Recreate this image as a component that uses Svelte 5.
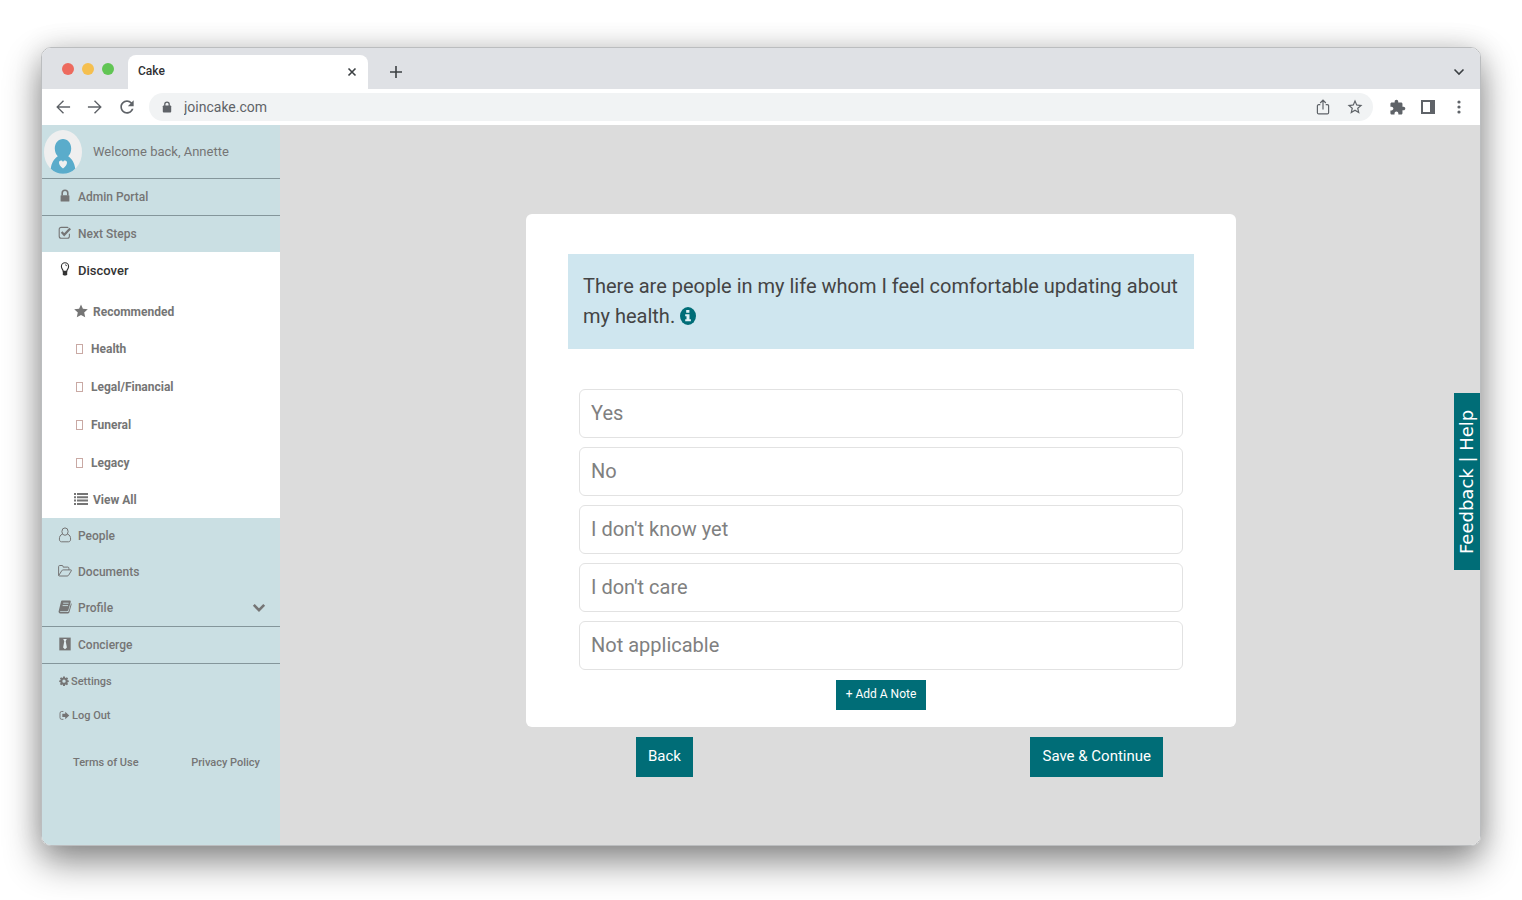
<script>
  const account = [
    { label: 'Admin Portal', icon: 'lock', line: true },
    { label: 'Next Steps', icon: 'check', line: false }
  ];
  const topics = [
    { label: 'Recommended', icon: 'star' },
    { label: 'Health', icon: '' },
    { label: 'Legal/Financial', icon: '' },
    { label: 'Funeral', icon: '' },
    { label: 'Legacy', icon: '' },
    { label: 'View All', icon: 'list' }
  ];
  const library = [
    { label: 'People', icon: 'person', line: false },
    { label: 'Documents', icon: 'folder', line: false },
    { label: 'Profile', icon: 'book', line: true, more: true },
    { label: 'Concierge', icon: 'tie', line: true }
  ];
  const answers = ['Yes', 'No', "I don't know yet", "I don't care", 'Not applicable'];
</script>

{#snippet glyph(name)}
  {#if name === 'lock'}
    <svg width="14" height="14" viewBox="0 0 14 14" aria-hidden="true">
      <path d="M4.2 6.4V4a2.8 2.8 0 0 1 5.6 0v2.4" fill="none" stroke="currentColor" stroke-width="1.6" />
      <rect x="2.6" y="6.2" width="8.8" height="6.4" rx=".6" fill="currentColor" />
    </svg>
  {:else if name === 'check'}
    <svg width="14" height="14" viewBox="0 0 14 14" aria-hidden="true">
      <path d="M11.4 7.8v2.4a2 2 0 0 1-2 2H3.2a2 2 0 0 1-2-2V3.4a2 2 0 0 1 2-2h6.2l1 .3" fill="none" stroke="currentColor" stroke-width="1.1" />
      <path d="m3.6 6 2.6 2.8 6-6.4" fill="none" stroke="currentColor" stroke-width="2.2" />
    </svg>
  {:else if name === 'bulb'}
    <svg width="14" height="14" viewBox="0 0 14 14" aria-hidden="true">
      <path d="M5.3 9.4C5.1 7.6 3.4 6.8 3.4 4.4a3.6 3.6 0 0 1 7.2 0c0 2.4-1.7 3.2-1.9 5z" fill="none" stroke="currentColor" stroke-width="1.1" />
      <path d="M7 2.8c1.1 0 1.7.5 1.8 1.4" fill="none" stroke="currentColor" stroke-width=".8" />
      <path d="M4.8 9.3h4.4v2.9L8.2 13.6H5.8l-1-1.4z" fill="currentColor" />
    </svg>
  {:else if name === 'star'}
    <svg width="14" height="14" viewBox="0 0 14 14" aria-hidden="true">
      <path d="m7 .4 1.9 4.3 4.9.6-3.6 3.1 1 4.9L7 10.9l-4.2 2.4 1-4.9L.2 5.3l4.9-.6z" fill="currentColor" />
    </svg>
  {:else if name === 'list'}
    <svg width="14" height="14" viewBox="0 0 14 14" aria-hidden="true">
      <path d="M0 1h2v2H0zM3 1h11v2H3zM0 4.3h2v2H0zM3 4.3h11v2H3zM0 7.6h2v2H0zM3 7.6h11v2H3zM0 10.9h2v2H0zM3 10.9h11v2H3z" fill="currentColor" />
    </svg>
  {:else if name === 'person'}
    <svg width="14" height="16" viewBox="0 0 14 16" aria-hidden="true">
      <g fill="none" stroke="currentColor" stroke-width="1">
        <ellipse cx="7" cy="4.6" rx="3.1" ry="3.7" />
        <path d="M4.3 7.2C2.2 7.9 1.4 9.7 1.4 12.1c0 1.7.8 2.7 2.1 2.7h7c1.3 0 2.1-1 2.1-2.7 0-2.4-.8-4.2-2.9-4.9" />
      </g>
    </svg>
  {:else if name === 'folder'}
    <svg width="14" height="14" viewBox="0 0 14 14" aria-hidden="true">
      <path d="M.6 11V2.6c0-.7.4-1.1 1.1-1.1h2.4c.7 0 1 .4 1 1.1v.5h4.7c.7 0 1.1.4 1.1 1.1v1.6M.7 11.6l3-4.8c.3-.6.7-.9 1.4-.9h7.8c.6 0 .7.4.4.9l-2.6 4.3c-.4.6-.8.9-1.5.9H1.6c-.7 0-1-.3-1-1" fill="none" stroke="currentColor" stroke-width="1" stroke-linejoin="round" />
    </svg>
  {:else if name === 'book'}
    <svg width="14" height="14" viewBox="0 0 14 14" aria-hidden="true">
      <path d="M4.4.6h7.3c.9 0 1.3.6 1 1.5l-2.3 8c-.2.8-.6 1.1-1.4 1.1H2.4c-.5 0-.5.8 0 .8h7.3c.5 0 .8-.2 1-.7l2.3-8.1c.6.3.8.7.6 1.3l-2.2 7.7c-.2.8-.8 1.2-1.6 1.2H2.3C1 13.4.2 12.1.7 11l2.2-9c.2-.9.7-1.4 1.5-1.4z" fill="currentColor" />
      <path d="M5.2 3.2h5.4M4.6 5.6H10" stroke="#cadfe3" stroke-width=".9" />
    </svg>
  {:else if name === 'tie'}
    <svg width="14" height="14" viewBox="0 0 14 14" aria-hidden="true">
      <rect x="1.3" y=".6" width="11.4" height="12.8" fill="currentColor" />
      <path d="M5.2 2h3.6L7.7 4.2l1.2 6.2L7 12.3l-1.9-1.9 1.2-6.2z" fill="#e1ecef" />
    </svg>
  {:else if name === 'gear'}
    <svg width="10" height="10" viewBox="1 1 22 22" aria-hidden="true">
      <path fill="currentColor" fill-rule="evenodd" d="m10 2 4 0 .5 2.9 1.4.6 2.4-1.7 2.700 2.800-1.700 2.300.6 1.400 2.600.4v3.600l-2.600.4-.6 1.500 1.700 2.300-2.700 2.800-2.400-1.700-1.400.6L14 23h-4l-.5-2.800-1.400-.6-2.400 1.700L3 18.500l1.700-2.300-.6-1.500-2.600-.4v-3.600l2.600-.4.6-1.400L3 6.600l2.700-2.800 2.400 1.700 1.400-.6zM12 8.700a3.700 3.700 0 1 0 0 7.400 3.700 3.700 0 0 0 0-7.400z" />
    </svg>
  {:else if name === 'exit'}
    <svg width="11" height="11" viewBox="0 0 12 12" aria-hidden="true">
      <path d="M4.800 1.600H3a1.900 1.900 0 0 0-1.900 1.900v4.800A1.900 1.900 0 0 0 3 10.200h1.800" fill="none" stroke="currentColor" stroke-width="1" />
      <path d="M3.600 4.200h3.200V1.800L11.200 6l-4.400 4.200V7.700H3.600z" fill="currentColor" />
    </svg>
  {/if}
{/snippet}

<div class="stage">
  <div class="window">
    <header class="tabs">
      <div class="lights"><i class="red"></i><i class="amber"></i><i class="green"></i></div>
      <div class="tab">
        <span>Cake</span>
        <button aria-label="Close tab">
          <svg width="10" height="10" viewBox="0 0 10 10"><path d="m1.500 1.500 7 7m0-7-7 7" stroke="#3c4043" stroke-width="1.600" /></svg>
        </button>
      </div>
      <button class="plus" aria-label="New tab">
        <svg width="12" height="12" viewBox="0 0 12 12"><path d="M6 0v12M0 6h12" stroke="#3c4043" stroke-width="1.600" /></svg>
      </button>
      <button class="tabmenu" aria-label="Search tabs">
        <svg width="12" height="8" viewBox="0 0 12 8"><path d="m1.500 1.500 4.500 4.500 4.500-4.500" fill="none" stroke="#3c4043" stroke-width="1.600" /></svg>
      </button>
    </header>

    <div class="toolbar">
      <div class="nav">
        <button aria-label="Back one page"><svg width="20" height="20" viewBox="0 0 24 24"><path d="M20.500 11.200H7l6.200-6.200-1.200-1.100L3.900 12l8.100 8.100 1.200-1.100L7 12.800h13.500z" /></svg></button>
        <button aria-label="Forward one page"><svg width="20" height="20" viewBox="0 0 24 24"><path d="M3.500 11.200H17l-6.200-6.200 1.200-1.100 8.100 8.100-8.100 8.100-1.200-1.100 6.200-6.200H3.500z" /></svg></button>
        <button aria-label="Reload"><svg width="20" height="20" viewBox="0 0 24 24"><path d="M17.650 6.350C16.200 4.900 14.210 4 12 4c-4.420 0-7.990 3.580-7.990 8s3.570 8 7.990 8c3.730 0 6.840-2.550 7.730-6h-2.080c-.82 2.330-3.040 4-5.650 4-3.310 0-6-2.690-6-6s2.690-6 6-6c1.660 0 3.140.69 4.220 1.780L13 11h7V4l-2.350 2.350z" /></svg></button>
      </div>
      <div class="omnibox">
        <svg width="10" height="12" viewBox="0 0 10 12" aria-hidden="true"><path d="M2.800 5V3.300a2.200 2.200 0 0 1 4.400 0V5" fill="none" stroke="#5f6368" stroke-width="1.300" /><rect x=".8" y="4.400" width="8.400" height="7" rx=".9" /></svg>
        <input type="text" aria-label="Address" value="joincake.com" />
        <button aria-label="Share"><svg width="20" height="20" viewBox="0 0 20 20"><path d="M7.300 7.700H5.600a1.200 1.200 0 0 0-1.200 1.200v6.800c0 .7.5 1.200 1.200 1.200h8.800c.7 0 1.200-.5 1.200-1.200V8.900c0-.7-.5-1.200-1.200-1.200h-1.700M10 12.500V3.500M7.200 6 10 3.200 12.800 6" fill="none" stroke="#5f6368" stroke-width="1.200" /></svg></button>
        <button aria-label="Bookmark"><svg width="18" height="18" viewBox="0 0 24 24"><path d="M22 9.240l-7.190-.62L12 2 9.190 8.630 2 9.240l5.460 4.730L5.820 21 12 17.270 18.180 21l-1.630-7.030L22 9.240zM12 15.400l-3.760 2.270 1-4.280-3.320-2.880 4.380-.38L12 6.100l1.710 4.040 4.380.38-3.320 2.880 1 4.280L12 15.400z" /></svg></button>
      </div>
      <div class="tools">
        <button aria-label="Extensions"><svg width="17" height="17" viewBox="0 0 24 24"><path d="M20.500 11H19V7c0-1.100-.9-2-2-2h-4V3.500C13 2.120 11.880 1 10.500 1S8 2.120 8 3.500V5H4c-1.100 0-1.990.9-1.990 2v3.800H3.500c1.490 0 2.700 1.210 2.700 2.700s-1.210 2.700-2.700 2.700H2V20c0 1.100.9 2 2 2h3.800v-1.500c0-1.490 1.210-2.700 2.700-2.700 1.490 0 2.700 1.210 2.700 2.700V22H17c1.100 0 2-.9 2-2v-4h1.500c1.380 0 2.500-1.120 2.500-2.500S21.880 11 20.500 11z" /></svg></button>
        <button aria-label="Side panel"><svg width="14" height="14" viewBox="0 0 14 14"><path fill-rule="evenodd" d="M0 0h14v14H0zM2 2v10h7V2z" /></svg></button>
        <button aria-label="Menu"><svg width="4" height="14" viewBox="0 0 4 14"><circle cx="2" cy="2" r="1.600" /><circle cx="2" cy="7" r="1.600" /><circle cx="2" cy="12" r="1.600" /></svg></button>
      </div>
    </div>

    <div class="site">
      <aside>
        <div class="user">
          <svg width="38" height="44" viewBox="0 0 38 44" aria-hidden="true">
            <ellipse cx="19" cy="22" rx="19" ry="22" fill="#efefef" />
            <path d="M19 9c4.600 0 8.200 4 8.200 9.500 0 3.300-1.200 6-3 7.700 3.700 2.300 6.500 7.100 7 12.500-3.400 3.500-7.500 5.100-12.200 5.100S10.200 42.200 6.800 38.700c.5-5.400 3.300-10.200 7-12.500-1.800-1.700-3-4.400-3-7.700C10.800 13 14.400 9 19 9z" fill="#5aaccb" />
            <path d="M19 38.500c-2.700-2.200-4-3.900-4-5.700 0-2.500 2.900-3.100 4-.8 1.100-2.300 4-1.700 4 .8 0 1.800-1.300 3.500-4 5.700z" fill="#efefef" />
          </svg>
          <span>Welcome back, Annette</span>
        </div>
        <nav>
          {#each account as item}
            <a href="#top" class="item" class:line={item.line}>{@render glyph(item.icon)}<span>{item.label}</span></a>
          {/each}
          <div class="open">
            <a href="#top" class="item current">{@render glyph('bulb')}<span>Discover</span></a>
            <div class="topics">
              {#each topics as topic}
                <a href="#top" class="topic" class:plain={!topic.icon}>
                  {#if topic.icon}{@render glyph(topic.icon)}{:else}<i class="box"></i>{/if}
                  <span>{topic.label}</span>
                </a>
              {/each}
            </div>
          </div>
          {#each library as item}
            <a href="#top" class="item" class:line={item.line}>
              {@render glyph(item.icon)}<span>{item.label}</span>
              {#if item.more}
                <svg class="more" width="14" height="10" viewBox="0 0 14 10" aria-hidden="true"><path d="m1.800 1.800 5.200 5.400 5.200-5.400" fill="none" stroke="currentColor" stroke-width="2.600" /></svg>
              {/if}
            </a>
          {/each}
          <a href="#top" class="small">{@render glyph('gear')}<span>Settings</span></a>
          <a href="#top" class="small">{@render glyph('exit')}<span>Log Out</span></a>
        </nav>
        <footer><a href="#top">Terms of Use</a><a href="#top">Privacy Policy</a></footer>
      </aside>

      <main>
        <div class="question">
          <section class="card">
            <h1>
              There are people in my life whom I feel comfortable updating about my health.
              <svg width="16" height="18" viewBox="0 0 16 18" role="img" aria-label="More information"><ellipse cx="8" cy="9" rx="8" ry="9" fill="#006d77" /><path d="M6.200 3h3.200v2.700H6.200zM5.200 7.200h4.300v5h1.400v2.100H5.200v-2.100h1.300V9.300H5.200z" fill="#dff0f5" /></svg>
            </h1>
            <div class="answers">
              {#each answers as answer}<button>{answer}</button>{/each}
            </div>
            <button class="solid note">+ Add A Note</button>
          </section>
          <div class="actions">
            <button class="solid">Back</button>
            <button class="solid">Save &amp; Continue</button>
          </div>
        </div>
        <button class="feedback">Feedback | Help</button>
      </main>
    </div>
  </div>
</div>

<style>
  :global(body) { margin: 0; background: #fff; }
  .stage {
    box-sizing: border-box;
    display: flex;
    min-height: 100vh;
    padding: 47px 41px 54px;
    overflow: hidden;
    font-family: Roboto, "Liberation Sans", sans-serif;
  }
  button { margin: 0; padding: 0; border: 0; background: none; font: inherit; color: inherit; cursor: pointer; }
  a { color: inherit; text-decoration: none; }
  svg { display: block; flex: none; }
  .window {
    flex: 1;
    min-width: 0;
    display: flex;
    flex-direction: column;
    border: 1px solid #bbbdbf;
    border-radius: 10px;
    overflow: hidden;
    box-shadow: 0 16px 36px rgba(0, 0, 0, .45), 0 0 28px rgba(0, 0, 0, .12);
  }
  .tabs { display: flex; align-items: center; height: 41px; background: #dfe1e5; }
  .lights { display: flex; gap: 8px; padding: 0 14px 0 20px; }
  .lights i { width: 12px; height: 12px; border-radius: 50%; }
  .red { background: #ed6a5e; }
  .amber { background: #f5bf4f; }
  .green { background: #61c554; }
  .tab {
    align-self: flex-end;
    box-sizing: border-box;
    display: flex;
    align-items: center;
    justify-content: space-between;
    width: 240px;
    height: 34px;
    padding: 0 11px 2px 10px;
    border-radius: 8px 8px 0 0;
    background: #fff;
    font-size: 12px;
    font-weight: 500;
    color: #303134;
  }
  .tab button { padding-top: 2px; }
  .plus { margin: 6px 0 0 22px; }
  .tabmenu { margin: 6px 15px 0 auto; }
  .toolbar { display: flex; align-items: center; height: 36px; padding: 0 11px; background: #fff; fill: #5f6368; }
  .nav, .tools { display: flex; gap: 12px; }
  .tools { gap: 11px; }
  .toolbar button { display: grid; place-items: center; width: 20px; height: 20px; }
  .omnibox {
    flex: 1;
    box-sizing: border-box;
    display: flex;
    align-items: center;
    gap: 12px;
    height: 28px;
    margin: 0 14px 0 12px;
    padding: 0 8px 0 13px;
    border-radius: 14px;
    background: #f1f3f4;
  }
  .omnibox input {
    flex: 1;
    min-width: 0;
    padding: 0;
    border: 0;
    outline: 0;
    background: none;
    font: 14px Roboto, sans-serif;
    color: #5f6368;
  }
  .site { flex: 1; display: flex; background: #dcdcdc; }
  aside { flex: 0 0 238px; background: #cadfe3; color: #757575; font-size: 12px; font-weight: 500; }
  .user {
    display: flex;
    align-items: center;
    gap: 11px;
    height: 53px;
    padding-left: 2px;
    border-bottom: 1px solid #84969b;
    font-size: 13px;
    font-weight: 400;
  }
  .item { display: flex; align-items: center; gap: 6px; height: 36px; padding: 0 14px 0 16px; }
  .item.line { border-bottom: 1px solid #84969b; }
  .item svg { margin-bottom: 2px; }
  .open { background: #fff; }
  .current { color: #333; font-size: 13px; }
  .topics { padding-top: 6px; font-weight: 700; }
  .topic { display: flex; align-items: center; gap: 5px; height: 36px; padding-left: 32px; }
  .topic.plain { gap: 8px; height: 38px; padding-left: 34px; }
  .topic svg { margin-bottom: 2px; }
  .box { width: 5px; height: 8px; border: 1px solid #c9a9a4; }
  .item .more { margin: 0 0 0 auto; }
  .small { display: flex; align-items: center; gap: 2px; height: 34px; padding-left: 17px; font-size: 11px; }
  footer { display: flex; justify-content: space-between; padding: 24px 20px 0 31px; font-size: 11px; }
  main { position: relative; flex: 1; padding: 89px 40px 40px 42px; }
  .question { max-width: 710px; margin: 0 auto; }
  .card { padding: 40px 42px 17px; border-radius: 6px; background: #fff; text-align: center; }
  h1 { margin: 0; padding: 17px 8px 18px 15px; background: #cfe6ef; font-size: 20px; line-height: 30px; font-weight: 400; color: #444; text-align: left; }
  h1 svg { display: inline-block; vertical-align: -2px; }
  .answers { display: flex; flex-direction: column; gap: 9px; padding: 40px 11px 10px; }
  .answers button {
    height: 49px;
    padding: 0 11px 2px;
    border: 1px solid #e2e2e2;
    border-radius: 6px;
    background: #fff;
    font-size: 20px;
    color: #808080;
    text-align: left;
  }
  .solid { height: 40px; padding: 0 12px 2px; background: #006d77; font-size: 15px; color: #fff; }
  .solid.note { height: 30px; padding: 0 10px 2px; font-size: 12px; }
  .actions { display: flex; justify-content: space-between; padding: 10px 73px 0 110px; }
  .feedback {
    position: absolute;
    top: 268px;
    right: 0;
    width: 26px;
    height: 177px;
    background: #006d77;
    font: 18px "DejaVu Sans", sans-serif;
    line-height: 26px;
    color: #fff;
    writing-mode: vertical-rl;
    transform: rotate(180deg);
  }
</style>
